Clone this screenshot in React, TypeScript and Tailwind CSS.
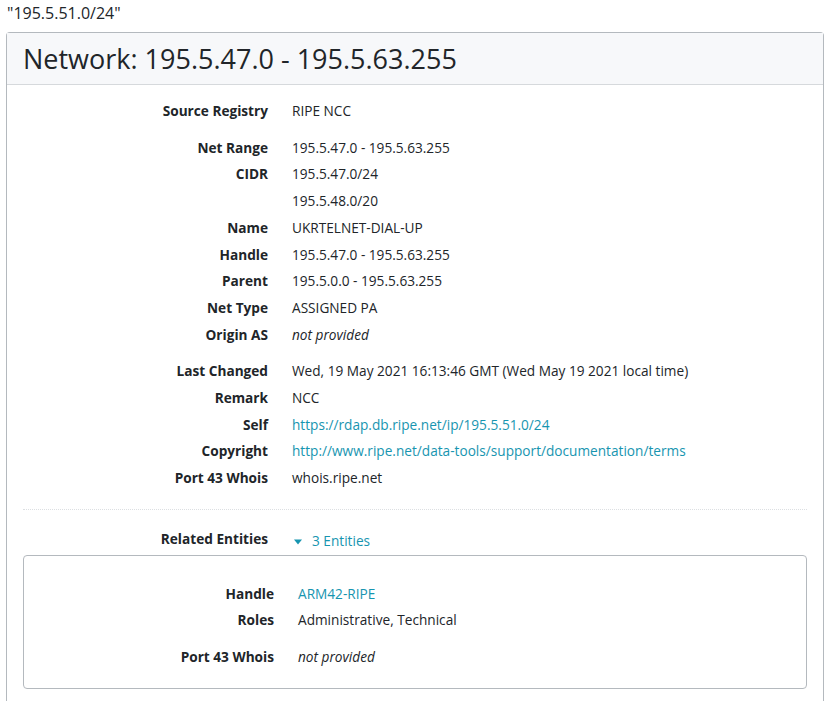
import React from "react";

type Row = { label?: string; value: React.ReactNode };

const link = "text-[#1795b0]";

const groups: Row[][] = [
  [{ label: "Source Registry", value: "RIPE NCC" }],
  [
    { label: "Net Range", value: "195.5.47.0 - 195.5.63.255" },
    { label: "CIDR", value: "195.5.47.0/24" },
    { value: "195.5.48.0/20" },
    { label: "Name", value: "UKRTELNET-DIAL-UP" },
    { label: "Handle", value: "195.5.47.0 - 195.5.63.255" },
    { label: "Parent", value: "195.5.0.0 - 195.5.63.255" },
    { label: "Net Type", value: "ASSIGNED PA" },
    { label: "Origin AS", value: <em>not provided</em> },
  ],
  [
    {
      label: "Last Changed",
      value: "Wed, 19 May 2021 16:13:46 GMT (Wed May 19 2021 local time)",
    },
    { label: "Remark", value: "NCC" },
    {
      label: "Self",
      value: <a className={link}>https://rdap.db.ripe.net/ip/195.5.51.0/24</a>,
    },
    {
      label: "Copyright",
      value: (
        <a className={link}>
          http://www.ripe.net/data-tools/support/documentation/terms
        </a>
      ),
    },
    { label: "Port 43 Whois", value: "whois.ripe.net" },
  ],
];

const Line = ({ row, labelW }: { row: Row; labelW: string }) => (
  <div className="flex h-[26.7px] items-center">
    <div className={`${labelW} shrink-0 text-right font-bold`}>{row.label}</div>
    <div className="pl-6">{row.value}</div>
  </div>
);

export default function App() {
  return (
    <div
      className="min-h-[701px] bg-white text-[13.65px] text-[#212529]"
      style={{ fontFamily: '"Open Sans", "Noto Sans", sans-serif' }}
    >
      <div className="pl-[7px] pt-[1px] text-[16px] leading-[24px]">"195.5.51.0/24"</div>
      <div className="ml-[6px] mt-[7px] w-[818px] rounded-t-[4px] border border-b-0 border-[#b4b9be]">
        <div className="flex h-[52px] items-center border-b border-[#d6d9dc] bg-[#f7f8fa] px-4 pb-[1px]">
          <h3 className="text-[27px] leading-none">Network: 195.5.47.0 - 195.5.63.255</h3>
        </div>
        <div className="px-4 pt-[13px]">
          <div className="flex flex-col gap-[10px]">
            {groups.map((g, i) => (
              <div key={i}>
                {g.map((r, j) => (
                  <Line key={j} row={r} labelW="w-[245px]" />
                ))}
              </div>
            ))}
          </div>
          <div className="mt-[17px] border-t border-dotted border-[#dcdfe2]" />
          <div className="mt-[17px] flex h-[26px] items-center">
            <div className="w-[245px] shrink-0 text-right font-bold">Related Entities</div>
            <div className={`flex items-center pl-6 pt-[4px] ${link}`}>
              <svg width="8" height="6" viewBox="0 0 8 6" className="mr-[10px] ml-[2px]">
                <path d="M0 0.5h8L4 5.5z" fill="currentColor" />
              </svg>
              3 Entities
            </div>
          </div>
          <div className="mt-[2px] rounded-[4px] border border-[#b4b9be] px-4 pb-[17px] pt-[25px]">
            <Line row={{ label: "Handle", value: <a className={link}>ARM42-RIPE</a> }} labelW="w-[234px]" />
            <Line row={{ label: "Roles", value: "Administrative, Technical" }} labelW="w-[234px]" />
            <div className="mt-[10px]">
              <Line row={{ label: "Port 43 Whois", value: <em>not provided</em> }} labelW="w-[234px]" />
            </div>
          </div>
          <div className="h-[20px]" />
        </div>
      </div>
    </div>
  );
}
